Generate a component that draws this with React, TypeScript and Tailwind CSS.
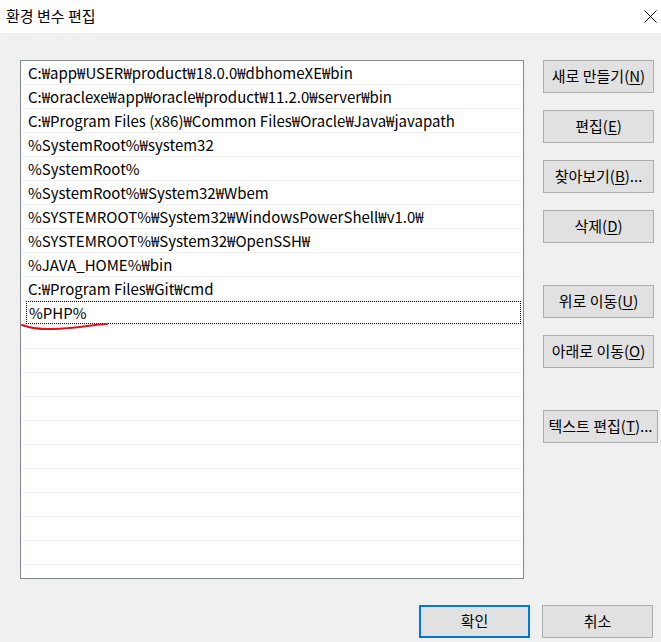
const paths = [
  'C:₩app₩USER₩product₩18.0.0₩dbhomeXE₩bin',
  'C:₩oraclexe₩app₩oracle₩product₩11.2.0₩server₩bin',
  'C:₩Program Files (x86)₩Common Files₩Oracle₩Java₩javapath',
  '%SystemRoot%₩system32',
  '%SystemRoot%',
  '%SystemRoot%₩System32₩Wbem',
  '%SYSTEMROOT%₩System32₩WindowsPowerShell₩v1.0₩',
  '%SYSTEMROOT%₩System32₩OpenSSH₩',
  '%JAVA_HOME%₩bin',
  'C:₩Program Files₩Git₩cmd',
  '%PHP%',
]

const rows = [...paths, ...Array(21 - paths.length).fill('')]

function Btn({ label, k, rest = '', wide = false, className = '' }: { label: string; k: string; rest?: string; wide?: boolean; className?: string }) {
  return (
    <button
      className={`flex h-[33px] items-center justify-center whitespace-nowrap border border-[#adadad] bg-[#e1e1e1] text-[15px] text-black ${wide ? 'w-[115px]' : 'w-[111px]'} ${className}`}
    >
      {label}(<span className="underline underline-offset-2">{k}</span>){rest}
    </button>
  )
}

export default function App() {
  return (
    <div className="flex h-[642px] w-[661px] flex-col bg-[#f0f0f0] font-['Noto_Sans_CJK_KR',sans-serif] text-black">
      <div className="flex h-[33px] items-center justify-between bg-white pl-[6px] pr-[4px]">
        <span className="text-[15px]">환경 변수 편집</span>
        <svg width="13" height="13" viewBox="0 0 13 13" className="mr-[0px]">
          <path d="M0.5 0.5 L12.5 12.5 M12.5 0.5 L0.5 12.5" stroke="#000" strokeWidth="1" />
        </svg>
      </div>
      <div className="flex pl-[20px] pt-[27px]">
        <div className="h-[519px] w-[504px] border border-[#828790] bg-white">
          {rows.map((r, i) => (
            <div key={i} className="relative mx-px h-[24px] border-b border-[#f0f0f0]">
              <div
                className={`absolute inset-y-0 left-[4px] right-[1px] flex items-center pl-[2px] text-[15px] leading-none ${i === 10 ? 'border border-dotted border-black' : ''}`}
              >
                {r}
              </div>
            </div>
          ))}
        </div>
        <div className="ml-[19px] flex flex-col">
          <Btn label="새로 만들기" k="N" />
          <Btn label="편집" k="E" className="mt-[17px]" />
          <Btn label="찾아보기" k="B" rest="..." className="mt-[17px]" />
          <Btn label="삭제" k="D" className="mt-[17px]" />
          <Btn label="위로 이동" k="U" className="mt-[42px]" />
          <Btn label="아래로 이동" k="O" className="mt-[17px]" />
          <Btn label="텍스트 편집" k="T" rest="..." wide className="mt-[42px]" />
        </div>
      </div>
      <div className="flex justify-end gap-[12px] pr-[8px] pt-[26px]">
        <button className="h-[33px] w-[111px] border-2 border-[#0078d7] bg-[#e1e1e1] text-[15px]">확인</button>
        <button className="h-[33px] w-[111px] border border-[#adadad] bg-[#e1e1e1] text-[15px]">취소</button>
      </div>
      <svg className="pointer-events-none absolute left-[20px] top-[320px]" width="90" height="12" viewBox="0 0 90 12">
        <path d="M2 5 C 12 9, 30 10, 50 8 S 80 4, 87 4" stroke="#e0141e" strokeWidth="2" fill="none" strokeLinecap="round" />
      </svg>
    </div>
  )
}
